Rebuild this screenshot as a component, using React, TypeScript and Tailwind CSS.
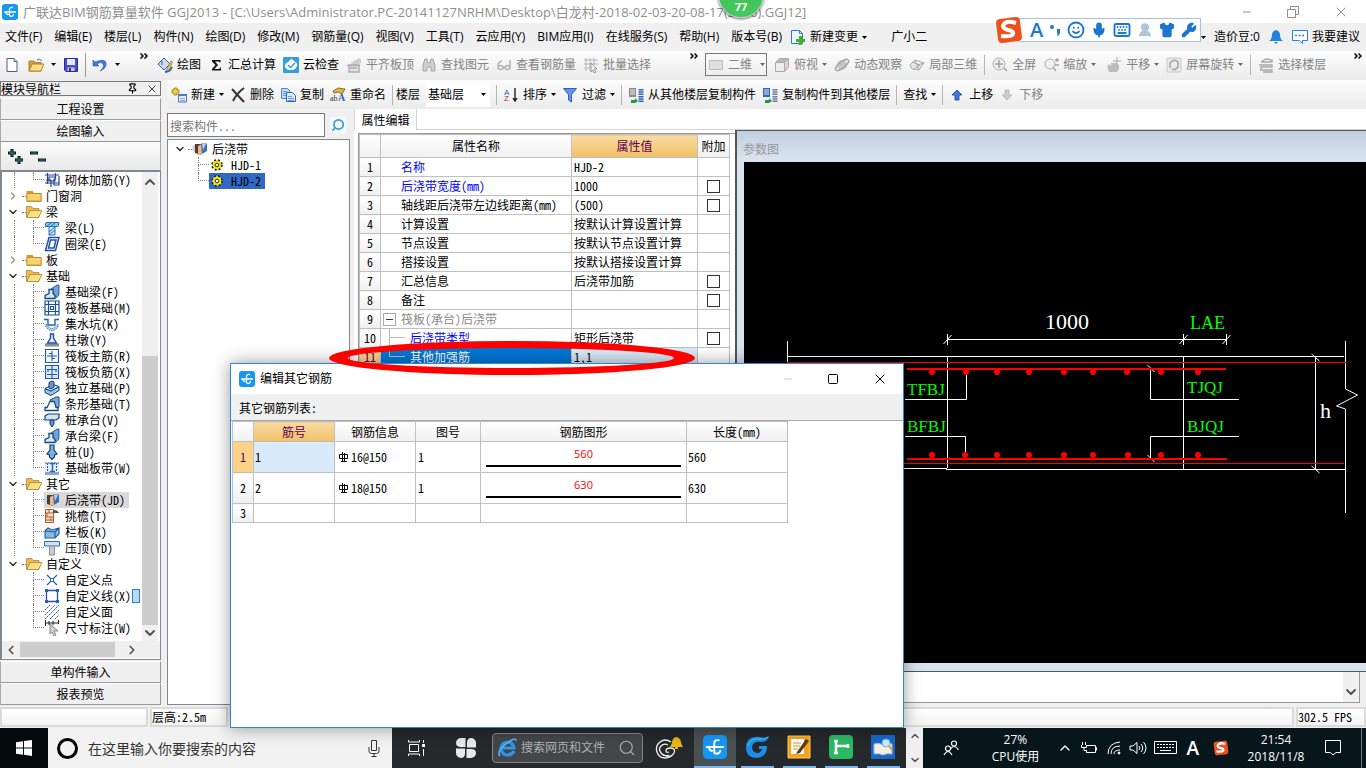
import type { ReactNode } from "react";
import {
  ChevronDown,
  ChevronLeft,
  ChevronRight,
  ChevronUp,
  Keyboard,
  Mic,
  Minus,
  Pin,
  Search,
  Shirt,
  Smile,
  Square,
  UserRound,
  Wrench,
  X,
} from "lucide-react";

const UI = "font-['Open_Sans','Noto_Sans_CJK_SC',sans-serif]";
const SONG = "font-['Noto_Sans_Mono_CJK_SC','Noto_Sans_CJK_SC',monospace]";

/* ---------------------------------------------------------------- icons */

const GLYPHS: Record<string, ReactNode> = {
  newFile: (
    <>
      <path d="M3 1.5h7l3 3v10H3z" fill="#fff" stroke="#4d6185" />
      <path d="M10 1.5v3h3" fill="#cfdcf0" stroke="#4d6185" />
    </>
  ),
  open: (
    <>
      <path d="M1 4h5l1 1.500h6V14H1z" fill="#d9a536" stroke="#9a6d12" strokeWidth=".8" />
      <path d="M4 7h12l-3 7H1z" fill="#fbdc85" stroke="#9a6d12" strokeWidth=".8" />
      <path d="M9 3q3-2 5 1" fill="none" stroke="#4a74b4" />
    </>
  ),
  save: (
    <>
      <path d="M1.500 1.500h13v13H3l-1.500-1.500z" fill="#4a4ad0" stroke="#2b2b93" />
      <path d="M4 2h8v6H4z" fill="#dfe8ff" />
      <path d="M4.500 10.500h7V14h-7z" fill="#c9c9d8" />
      <path d="M6 11h2v3H6z" fill="#2b2b93" />
    </>
  ),
  undo: (
    <path d="M1 3v6h6L5 7q4-3 6 0t-3 7q7-3 6-8T3 5z" fill="#3f78d8" stroke="#2456a8" strokeWidth=".6" />
  ),
  paint: (
    <>
      <path d="m1 7 6-6 6 6-6 6z" fill="#cfdcf0" stroke="#385b93" />
      <path d="M5 4v4" stroke="#385b93" />
      <path d="M9 14 14 4l1.500 1L12 14z" fill="#f2c64b" stroke="#83651b" strokeWidth=".6" />
      <path d="M8 15q5 0 7-5" fill="none" stroke="#2d62c8" strokeWidth="2" />
    </>
  ),
  sigma: <path d="M12.500 3H4v1.500L7.500 8 4 12v1.500h9v-3h-1q0 1.500-1 1.500H6.500L10 8 7 4.500h4q.5 0 .5 1h1z" fill="#111" />,
  cloudCheck: (
    <>
      <rect width="16" height="16" rx="1" fill="#2f9fe0" />
      <path d="M8 2a6 6 0 0 1 4 3q3 1 2 4t-4 4H6q-4-1-4-4t3-4z" fill="#fff" />
      <path d="m5 8 2.500 2.500L12 6" fill="none" stroke="#2f9fe0" strokeWidth="1.500" />
    </>
  ),
  align: (
    <>
      <path d="M5 6 13 1l2 1v4l-8 4z" fill="#cfcfcf" />
      <path d="M3 15V8h10v7zM1 8.500h13M4 11h7" fill="#e4e4e4" stroke="#acacac" strokeWidth="1.400" />
    </>
  ),
  binoculars: (
    <path d="M2 14V8l2-6h2l1 4h2l1-4h2l2 6v6h-4v-4H6v4z" fill="#cfcfcf" stroke="#a5a5a5" />
  ),
  glasses: (
    <path d="M6 4Q2 5 2 9m12-6v7M2 10.500a2.500 2 0 1 0 5 0 2.500 2 0 1 0-5 0m7 0a2.500 2 0 1 0 5 0 2.500 2 0 1 0-5 0M7 10h2" fill="none" stroke="#b0b0b0" strokeWidth="1.500" />
  ),
  batch: (
    <>
      <path d="M1 3h14M1 7h14M1 11h8M3 1v13M7 1v13M11 1v7" stroke="#b4b4b4" />
      <path d="m8 6 6 6h-3l2 3-2 1-1-3-2 2z" fill="#f3f3f3" stroke="#999" />
    </>
  ),
  plane: <path d="M1.500 3.500h13v9h-13z" fill="#e0e0e0" stroke="#bdbdbd" />,
  cube: (
    <>
      <path d="M1.500 5.500h9v9h-9z" fill="#ececec" stroke="#ababab" />
      <path d="m1.500 5.500 4-4h9l-4 4z" fill="#b9b9b9" stroke="#ababab" />
      <path d="m10.500 5.500 4-4v9l-4 4z" fill="#d5d5d5" stroke="#ababab" />
    </>
  ),
  orbit: (
    <>
      <circle cx="8" cy="8" r="5" fill="#c6c6c6" />
      <ellipse cx="8" cy="8" rx="8" ry="3" transform="rotate(-38 8 8)" fill="none" stroke="#a7a7a7" strokeWidth="1.400" />
    </>
  ),
  local3d: (
    <path d="m1 8 5-5 9 3-5 7-7-1zm5-5 2 5 7-2M8 8l2 5M3 5l8 3-6 4" fill="#e6e6e6" stroke="#aaa" />
  ),
  fullscreen: (
    <>
      <circle cx="7" cy="7" r="6" fill="#ededed" stroke="#b0b0b0" />
      <path d="M7 3v8M3 7h8m1 4 3 3" stroke="#a5a5a5" strokeWidth="1.600" />
    </>
  ),
  zoomer: (
    <>
      <circle cx="7" cy="7" r="5" fill="#f0f0f0" stroke="#b0b0b0" />
      <path d="m10 10 3 4M12 3h4m-2-2v4M12 8h4" stroke="#a5a5a5" strokeWidth="1.300" />
    </>
  ),
  pan: (
    <>
      <path d="M3 15Q0 9 3 7l2 2V6h5l3 2v4l-2 3z" fill="#bdbdbd" />
      <path d="M11 0v8M7 4h8" stroke="#a8a8a8" />
    </>
  ),
  rotate: (
    <>
      <path d="M1 1h14v14H1z" fill="#e9e9e9" stroke="#c9c9c9" />
      <path d="M4 11V6q4-5 8-1v5q-3 4-6 2" fill="none" stroke="#a5a5a5" strokeWidth="1.600" />
    </>
  ),
  floors: (
    <path d="m3 5 5-3 6 1v2H3m-2 3h13v2H3v3h11v2H5" fill="none" stroke="#a8a8a8" strokeWidth="1.400" />
  ),
  create: (
    <>
      <path d="M7.500 7.500h8v7.500h-8z" fill="#e5eefc" stroke="#4c78bd" />
      <path d="M7 7h9v2H7z" fill="#4c78bd" />
      <path d="M9 11.500h5M9 13.500h5" stroke="#88a7d5" />
      <path d="M3 1h3v2h2v3H6v2H3V6H1V3h2z" fill="#f6cf3f" stroke="#876a0a" strokeWidth=".7" />
    </>
  ),
  remove: <path d="m2 2 12 13M14 1Q7 6 3 14" stroke="#333" strokeWidth="2" fill="none" />,
  copy: (
    <>
      <path d="M1.500 1.500h6l2 2v8h-8z" fill="#c3daf8" stroke="#5480c2" />
      <path d="M6.500 5.500h6l3 3v6h-9z" fill="#dbe9fd" stroke="#3867b2" />
      <path d="M8 9.500h4m-4 2h6m-6 2h6M3 4.500h4m-4 2h3m-3 2h3" stroke="#6f98d4" />
    </>
  ),
  rename: (
    <>
      <path d="m3 4 5-3 7 1-3 5-4-2-4 1z" fill="#e1b548" stroke="#6d5420" strokeWidth=".8" />
      <text x="0" y="14" fontSize="8" fontFamily="Liberation Serif, serif" fill="#333">ab</text>
      <text x="8" y="14" fontSize="10" fontWeight="bold" fontFamily="Liberation Serif, serif" fill="#2762c4">A</text>
    </>
  ),
  sort: (
    <>
      <text x="1" y="8" fontSize="8" fontFamily="Liberation Sans, sans-serif" fill="#2b5fb4">A</text>
      <text x="1" y="14" fontSize="8" fontFamily="Liberation Sans, sans-serif" fill="#a03a3a">Z</text>
      <path d="M12 1v12m-2-2 2 3 2-3" stroke="#111" strokeWidth="1.300" fill="none" />
    </>
  ),
  filter: <path d="M1.500 1.500h13l-5 6V15l-3-2V7.500z" fill="#5f95ec" stroke="#2e5fb5" />,
  fromFloor: (
    <>
      <path d="M1 1h7v9H1z" fill="#8a8a8a" />
      <path d="M2 3h5M2 5h5M2 7h5" stroke="#eee" />
      <path d="M13 2v13" stroke="#2f67b8" strokeWidth="5" strokeDasharray="1.500 .8" />
      <path d="M3 13h4v-2l3 3-3 2H3z" fill="#1c9a3c" />
    </>
  ),
  toFloor: (
    <>
      <path d="M1 1h7v9H1z" fill="#2f67b8" />
      <path d="M2 3h5M2 5h5M2 7h5" stroke="#eee" />
      <path d="M13 2v13" stroke="#6a7f9c" strokeWidth="5" strokeDasharray="1.500 .8" />
      <path d="M3 13h4v-2l3 3-3 2H3z" fill="#1c9a3c" />
    </>
  ),
  up: <path d="m8 3 5 5h-3v5H6V8H3z" fill="#3f78e0" stroke="#1d3f91" strokeWidth=".8" />,
  down: <path d="m8 13 5-5h-3V3H6v5H3z" fill="#cdcdcd" stroke="#b3b3b3" strokeWidth=".8" />,
  change: (
    <>
      <path d="M1.500 1.500h8l3 3v10h-11z" fill="#eef6ff" stroke="#2c7cd1" />
      <path d="M9.500 1.500v3h3" fill="none" stroke="#2c7cd1" />
      <path d="M9 7h3v3h3v3h-3v3H9v-3H6v-3h3z" fill="#45b02b" />
    </>
  ),
  bell: (
    <>
      <path d="M8 1q4 1 4 5 0 4 3 6H1q3-2 3-6 0-4 4-5z" fill="#2083e0" />
      <path d="M6 13h4l-2 2z" fill="#2083e0" />
    </>
  ),
  bubble: (
    <>
      <path d="M.5 1.500h15v10h-5v3l-3-3h-7z" fill="#fff" stroke="#2083e0" />
      <path d="M3 6.500h10" stroke="#2083e0" strokeWidth="1.500" strokeDasharray="2 1.500" />
    </>
  ),
  folder: (
    <>
      <path d="M.5 3h6l1.500 2h7.500v9H.5z" fill="#d79e29" />
      <path d="M1 5.500h14V13H1z" fill="#f8d373" stroke="#b47d16" strokeWidth=".7" />
    </>
  ),
  folderOpen: (
    <>
      <path d="M.5 2.500h5l1.500 2h6V13H.5z" fill="#e9bd55" stroke="#97681a" strokeWidth=".6" />
      <path d="M4 6.500h12L12.500 13.500H.8z" fill="#fbdf85" stroke="#a8761a" strokeWidth=".7" />
    </>
  ),
  masonry: (
    <path d="M1 3h14M1 11h14M3.500 1v11m8-11v6M5 5h6v4H5zM2 8h5v7m3-8v6h5V4" fill="none" stroke="#28459e" strokeWidth="1.200" />
  ),
  beam: (
    <>
      <path d="M2 2.500h13l-1 4H1z" fill="#8cc6ee" stroke="#2b6fb5" />
      <path d="M5 6.500h6V15H5z" fill="#cbe7fa" stroke="#2b6fb5" />
      <path d="m5 12 6-5m-6 8 6-5M3 6l4-3m0 3 4-3" stroke="#2b6fb5" />
    </>
  ),
  ringBeam: <path d="M5 1.500h10L11.500 14.500h-10zM6.500 4h5.500L10 12H4.500z" fill="#fff" stroke="#2350ae" strokeWidth="1.500" />,
  foundationBeam: (
    <>
      <path d="m7 5 6-4h2v10l-3 3z" fill="#6ea3d8" stroke="#154a83" strokeWidth=".8" />
      <path d="M1 14.500v-3l4-2v-4h4v4l2 2v3z" fill="#d7e9fa" stroke="#154a83" strokeWidth="1.300" />
    </>
  ),
  raft: <path d="M1 1h14v14H1zM4.500 1v14m7-14v14M1 4.500h14M1 11.500h14M6.500 6.500h3v3h-3z" fill="none" stroke="#1b4e92" strokeWidth="1.200" />,
  sump: (
    <>
      <path d="M0 3.500h4V9h7V3.500h4" fill="none" stroke="#2362b5" strokeWidth="1.400" />
      <path d="M2 8q6 9 12 0v3q-6 7-12 0z" fill="#b9d7f2" stroke="#2362b5" strokeDasharray="1.500 1" />
    </>
  ),
  pier: (
    <>
      <path d="M1 11.500h14v3H1z" fill="#8b8b8b" />
      <path d="M6.500 2h3v4l3 5h-9l3-5z" fill="#dcecff" stroke="#1d4fa3" strokeWidth="1.400" />
    </>
  ),
  mainBar: <path d="M1.500 1.500h13v13h-13zM8 3v10M3 8h10M5 5.500h3m0 5h3" fill="#f3f8ff" stroke="#1f58b8" strokeWidth="1.100" />,
  negBar: <path d="M1.500 1.500h13v13h-13zM8 1v14M3 5.500h10M3 10.500h10M4 5v3m8-3v3" fill="#dce9fb" stroke="#1f58b8" strokeWidth="1.100" />,
  isolated: (
    <>
      <path d="M1 8.500v4l6 3 8-5V6.500L7 11z" fill="#9dc4ea" stroke="#123f74" />
      <path d="m1 8.500 8-4 6 2-8 4.500z" fill="#d8e9fa" stroke="#123f74" />
      <path d="M5 2.500 8 1l2 1v5L7 9 5 8z" fill="#6598c9" stroke="#123f74" />
    </>
  ),
  strip: (
    <>
      <path d="m6 4 6-3h3v10l-3 3z" fill="#7eaddb" stroke="#154a83" />
      <path d="M1 14.500v-3h2l2-4 1-2h4l1 2 1 4h2v3z" fill="#fff" stroke="#154a83" strokeWidth="1.300" />
    </>
  ),
  cap: (
    <>
      <path d="M1 4 4 2h11v4l-3 2H1z" fill="#cfe3f7" stroke="#123f74" strokeWidth="1.200" />
      <path d="M6 8h4v4l-2 3-2-3z" fill="#5c93cc" stroke="#123f74" />
    </>
  ),
  pile: <path d="M6 1h4v5l3 4-2.500 1v2L8 15.500 5.500 13v-2L3 10l3-4z" fill="#7fb0e0" stroke="#123f74" strokeWidth="1.200" />,
  bandPlate: (
    <>
      <path d="M1 3h14v9H1z" fill="#e4eefb" />
      <path d="M1 3h14M3.500 3v9m9-9v9" stroke="#2b5fb4" strokeDasharray="2 1" />
      <path d="M1 12h14v3H1z" fill="#8aa7cd" />
      <path d="M6 3.500h5M6 11.500h5M8.500 3v9" stroke="#2b5fb4" strokeWidth="1.400" />
    </>
  ),
  postCast: (
    <>
      <path d="M.5 5 4 3v9l-3.500-2z" fill="#c8d2e2" />
      <path d="M3 3h6v11l-6-2z" fill="#5a3a26" />
      <path d="m6 5 4-2v10l-4 1z" fill="#e9b98e" />
      <path d="M9 2.500h6V10l-5 3z" fill="#3f6cb8" />
      <path d="M10 3h4l-3 6z" fill="#b6d0f1" />
    </>
  ),
  eave: (
    <>
      <path d="M1.500 1.500h8v13h-8z" fill="#fbe5d4" stroke="#b55523" />
      <path d="M1 5h8M1 9h8M5 1v4m-2 0v4m4 0v4M1 12h8" stroke="#b55523" />
      <path d="M9 2q5 0 6 3H9z" fill="#55504a" />
    </>
  ),
  rail: <path d="m1 7 3-3 4 2 7-2v6l-4 4H1zm0 0 10 1v6m0-6 4-4" fill="#8bb9e4" stroke="#215d9c" strokeWidth="1.100" />,
  coping: (
    <>
      <path d="M.5 1.500h15V6H.5z" fill="#cfe2f6" stroke="#2b6fc4" />
      <path d="M5.500 6h5v9h-5z" fill="#cacaca" stroke="#909090" />
    </>
  ),
  customPoint: (
    <>
      <path d="m3 3 10 10m0-10L3 13" stroke="#2b5fb4" strokeWidth="1.200" />
      <path d="M6.500 6.500h3v3h-3z" fill="#fff" stroke="#2b5fb4" />
    </>
  ),
  customLine: (
    <>
      <path d="M2.500 2.500h11v11h-11z" fill="none" stroke="#2350ae" strokeWidth="1.300" />
      <path d="M1 1h3v3H1zm11 0h3v3h-3zM1 12h3v3H1zm11 0h3v3h-3z" fill="#2b5fb4" />
    </>
  ),
  customFace: <path d="m1 6 5-5M1 11 11 1M1 15 15 1M6 15l9-9m-4 9 4-4" stroke="#2b5fb4" strokeDasharray="2 .6" />,
  dimension: (
    <>
      <path d="M1 3h14M1.500 0v6m13-6v4M5 1v4m4-4v4" stroke="#222" />
      <path d="m6 4 8 7h-4l2 4-2 1-2-4-2 2z" fill="#cfcfcf" stroke="#8c8c8c" />
    </>
  ),
  gear: (
    <>
      <circle cx="8" cy="8" r="4" fill="#f1e51a" stroke="#f1e51a" strokeWidth="2" />
      <circle cx="8" cy="8" r="5" fill="none" stroke="#222" strokeWidth="1.500" strokeDasharray="2 2" />
      <circle cx="8" cy="8" r="1.800" fill="#fff" stroke="#333" />
    </>
  ),
  logo: (
    <>
      <rect width="16" height="16" rx="3" fill="#1597f3" />
      <path
        d="M10.500 3.500Q7.500 3 7.500 5.500V11q0 1.500 1.500 1.500 2 0 2.500-2M2.500 8h11M4 8q0 2.500 2 2.500"
        fill="none"
        stroke="#fff"
        strokeWidth="1.300"
        strokeLinecap="round"
      />
    </>
  ),
};

function Glyph({ name, className = "size-4" }: { name: string; className?: string }) {
  return (
    <svg viewBox="0 0 16 16" className={`shrink-0 ${className}`} aria-hidden>
      {GLYPHS[name]}
    </svg>
  );
}

function Caret({ className = "text-black" }: { className?: string }) {
  return (
    <svg viewBox="0 0 5 3" className={`h-[3px] w-[5px] shrink-0 ${className}`} aria-hidden>
      <path d="M0 0h5L2.500 3z" fill="currentColor" />
    </svg>
  );
}

function SogouMark({ className }: { className: string }) {
  return (
    <svg viewBox="0 0 28 28" className={className} aria-hidden>
      <rect x="2" y="2" width="24" height="24" rx="4" fill="#f0501e" transform="rotate(-7 14 14)" />
      <path d="M21 7q-9-3-12 1t4 6q6 1 5 4t-12 2" fill="none" stroke="#fff" strokeWidth="4" />
    </svg>
  );
}

/* -------------------------------------------------------------- toolbars */

function Tool({
  icon,
  label,
  caret,
  muted,
}: {
  icon?: string;
  label: string;
  caret?: boolean;
  muted?: boolean;
}) {
  return (
    <button type="button" className={`flex shrink-0 items-center gap-1 ${muted ? "text-[#838383]" : "text-black"}`}>
      {icon && <Glyph name={icon} />}
      {label}
      {caret && <Caret className={muted ? "text-[#6d6d6d]" : "text-black"} />}
    </button>
  );
}

const Divider = () => <span className="h-5 w-px shrink-0 bg-[#b5b5b5]" />;
const More = () => (
  <svg viewBox="0 0 8 6" className="-mt-3 h-1.5 w-2" fill="none" stroke="#000" strokeWidth="1.500" aria-hidden>
    <path d="m.5.5 2.500 2.500L.5 5.500m4-5L7 3 4.500 5.500" />
  </svg>
);

const MENUS = [
  "文件(F)", "编辑(E)", "楼层(L)", "构件(N)", "绘图(D)", "修改(M)", "钢筋量(Q)", "视图(V)",
  "工具(T)", "云应用(Y)", "BIM应用(I)", "在线服务(S)", "帮助(H)", "版本号(B)",
];

function TitleBar() {
  return (
    <header className="flex h-[23px] shrink-0 items-center bg-white pl-0.5 text-[#8f8f8f]">
      <Glyph name="logo" />
      <h1 className="ml-[5px] text-[13px] leading-5 whitespace-pre">
        广联达BIM钢筋算量软件 GGJ2013 - [C:\Users\Administrator.PC-20141127NRHM\Desktop\白龙村-2018-02-03-20-08-17(2666).GGJ12]
      </h1>
      <div className="mr-[17px] ml-auto flex items-center gap-[34px]">
        <button type="button" aria-label="最小化" className="w-3"><Minus className="size-3" strokeWidth={2} /></button>
        <button type="button" aria-label="还原">
          <svg viewBox="0 0 12 12" className="size-3" fill="none" stroke="currentColor">
            <path d="M.5 3.500h8v8h-8zM3.500 3.500v-3h8v8h-3" />
          </svg>
        </button>
        <button type="button" aria-label="关闭"><X className="size-4" strokeWidth={1.500} /></button>
      </div>
    </header>
  );
}

function MenuBar() {
  return (
    <nav className="flex h-7 shrink-0 items-center gap-3 bg-[#f0f0f0] pr-1.5 pl-[5px] text-[12px] whitespace-nowrap">
      {MENUS.map((m) => (
        <button key={m} type="button" className="shrink-0">{m}</button>
      ))}
      <button type="button" className="-ml-1 flex shrink-0 items-center gap-1">
        <Glyph name="change" />
        新建变更
        <Caret />
      </button>
      <button type="button" className="ml-3 shrink-0">广小二</button>
      <span className="ml-auto flex items-center gap-2">
        <Caret />
        <span>造价豆:0</span>
        <Glyph name="bell" />
        <button type="button" className="flex items-center gap-1"><Glyph name="bubble" />我要建议</button>
      </span>
    </nav>
  );
}

function MainToolbar() {
  return (
    <div className="flex h-[29px] shrink-0 items-center bg-linear-to-b from-[#fdfdfd] to-[#ebebeb] pb-0.5 text-[12px] whitespace-nowrap">
      <div className="flex w-[154px] shrink-0 items-center pl-1">
        <button type="button" aria-label="新建"><Glyph name="newFile" /></button>
        <button type="button" aria-label="打开" className="ml-2 flex items-center gap-[7px]"><Glyph name="open" /><Caret /></button>
        <button type="button" aria-label="保存" className="ml-[7px]"><Glyph name="save" /></button>
        <span className="mx-1.5 h-6 w-px bg-[#9a9a9a]" />
        <button type="button" aria-label="撤销" className="flex items-center gap-[7px]"><Glyph name="undo" /><Caret /></button>
        <span className="ml-5"><More /></span>
      </div>
      <div className="flex shrink-0 items-center gap-[7px] pl-[3px]">
        <Tool icon="paint" label="绘图" />
        <Tool icon="sigma" label="汇总计算" />
        <Tool icon="cloudCheck" label="云检查" />
        <Tool icon="align" label="平齐板顶" muted />
        <Tool icon="binoculars" label="查找图元" muted />
        <Tool icon="glasses" label="查看钢筋量" muted />
        <Tool icon="batch" label="批量选择" muted />
      </div>
      <span className="ml-[39px] w-[15px]"><More /></span>
      <div className="flex flex-1 items-center gap-[7px] overflow-hidden">
        <button type="button" className="flex h-[23px] w-[62px] shrink-0 items-center gap-1 border border-[#777] pl-0.5 text-[#838383]">
          <Glyph name="plane" />
          二维
          <span className="ml-1"><Caret className="text-[#6d6d6d]" /></span>
        </button>
        <Tool icon="cube" label="俯视" caret muted />
        <Tool icon="orbit" label="动态观察" muted />
        <Tool icon="local3d" label="局部三维" muted />
        <Divider />
        <Tool icon="fullscreen" label="全屏" muted />
        <Tool icon="zoomer" label="缩放" caret muted />
        <span className="-ml-1" />
        <Tool icon="pan" label="平移" caret muted />
        <Tool icon="rotate" label="屏幕旋转" caret muted />
        <Divider />
        <Tool icon="floors" label="选择楼层" muted />
        <span className="mr-1 ml-auto"><More /></span>
      </div>
    </div>
  );
}

function ComponentToolbar() {
  return (
    <div className="flex h-[29px] shrink-0 items-center gap-1.5 rounded-l bg-linear-to-b from-[#fdfdfd] to-[#ebebeb] pl-1 text-[12px] whitespace-nowrap">
      <Tool icon="create" label="新建" caret />
      <Tool icon="remove" label="删除" />
      <Tool icon="copy" label="复制" />
      <Tool icon="rename" label="重命名" />
      <span className="flex items-center gap-[3px]"><Divider /><label htmlFor="floor">楼层</label></span>
      <span className="relative flex items-center bg-white">
        <select id="floor" className="h-6 w-16 appearance-none bg-transparent pl-0.5 text-[12px] outline-none">
          <option>基础层</option>
        </select>
        <span className="pointer-events-none absolute right-1"><Caret /></span>
      </span>
      <Divider />
      <Tool icon="sort" label="排序" caret />
      <Tool icon="filter" label="过滤" caret />
      <Divider />
      <Tool icon="fromFloor" label="从其他楼层复制构件" />
      <Tool icon="toFloor" label="复制构件到其他楼层" />
      <Divider />
      <Tool label="查找" caret />
      <Divider />
      <Tool icon="up" label="上移" />
      <Tool icon="down" label="下移" muted />
    </div>
  );
}

/* -------------------------------------------------------- navigation tree */

type Group = { name: string; open?: boolean; items?: [icon: string, label: string][] };

const GROUPS: Group[] = [
  { name: "门窗洞" },
  { name: "梁", open: true, items: [["beam", "梁(L)"], ["ringBeam", "圈梁(E)"]] },
  { name: "板" },
  {
    name: "基础",
    open: true,
    items: [
      ["foundationBeam", "基础梁(F)"],
      ["raft", "筏板基础(M)"],
      ["sump", "集水坑(K)"],
      ["pier", "柱墩(Y)"],
      ["mainBar", "筏板主筋(R)"],
      ["negBar", "筏板负筋(X)"],
      ["isolated", "独立基础(P)"],
      ["strip", "条形基础(T)"],
      ["cap", "桩承台(V)"],
      ["foundationBeam", "承台梁(F)"],
      ["pile", "桩(U)"],
      ["bandPlate", "基础板带(W)"],
    ],
  },
  {
    name: "其它",
    open: true,
    items: [["postCast", "后浇带(JD)"], ["eave", "挑檐(T)"], ["rail", "栏板(K)"], ["coping", "压顶(YD)"]],
  },
  {
    name: "自定义",
    open: true,
    items: [
      ["customPoint", "自定义点"],
      ["customLine", "自定义线(X)"],
      ["customFace", "自定义面"],
      ["dimension", "尺寸标注(W)"],
    ],
  },
];

function Elbow({ last }: { last?: boolean }) {
  return (
    <span className="flex h-4 w-[11px] shrink-0 flex-col">
      <span className="h-2 border-b border-l border-dotted border-[#808080]" />
      <span className={`h-2 ${last ? "" : "border-l border-dotted border-[#808080]"}`} />
    </span>
  );
}

function Leaf({ icon, label, last, guide }: { icon: string; label: string; last: boolean; guide: boolean }) {
  const current = label === "后浇带(JD)";
  return (
    <li className="flex h-4 items-center pl-3 whitespace-nowrap">
      <span className={`h-4 w-[19px] shrink-0 ${guide ? "border-l border-dotted border-[#808080]" : ""}`} />
      <Elbow last={last} />
      <span className={`flex h-4 items-center gap-[5px] pr-1 ${current ? "bg-[#d9d9d9]" : ""}`}>
        <Glyph name={icon} />
        <span className="leading-4">{label}</span>
      </span>
      {label === "自定义线(X)" && <span className="-ml-[3px] h-[14px] w-2 shrink-0 border border-[#2d7fd3] bg-[#b9d9f7]" />}
    </li>
  );
}

function NavTree() {
  return (
    <ul className="min-w-0 flex-1 overflow-hidden">
      <Leaf icon="masonry" label="砌体加筋(Y)" last guide />
      {GROUPS.map((g, gi) => (
        <li key={g.name}>
          <div className="flex h-4 items-center pl-[5px]">
            {g.open ? (
              <ChevronDown className="size-3 text-[#333]" strokeWidth={3} />
            ) : (
              <ChevronRight className="size-3 text-[#999]" strokeWidth={3} />
            )}
            <span className="ml-[3px] w-1 border-t border-dotted border-[#808080]" />
            <Glyph name={g.open ? "folderOpen" : "folder"} />
            <span className="ml-1 leading-4">{g.name}</span>
          </div>
          {g.items && (
            <ul>
              {g.items.map(([icon, label], i) => (
                <Leaf
                  key={label}
                  icon={icon}
                  label={label}
                  last={i === g.items!.length - 1}
                  guide={gi < GROUPS.length - 1}
                />
              ))}
            </ul>
          )}
        </li>
      ))}
    </ul>
  );
}

function PanelButton({ children }: { children: ReactNode }) {
  return (
    <button type="button" className="block h-[22px] w-full border border-t-white border-r-[#999] border-b-[#999] border-l-[#aaa] bg-[#f0f0f0] leading-5">
      {children}
    </button>
  );
}

function NavPanel() {
  return (
    <aside className={`flex w-[161px] shrink-0 flex-col text-[12px] ${SONG}`}>
      <div className="mt-px flex h-[15px] items-center border border-[#777] leading-3">
        <h2>模块导航栏</h2>
        <Pin className="ml-auto size-[11px]" strokeWidth={2.500} />
        <X className="mr-0.5 ml-2 size-3" strokeWidth={1.500} />
      </div>
      <div className="mt-0.5">
        <PanelButton>工程设置</PanelButton>
        <PanelButton>绘图输入</PanelButton>
      </div>
      <div className="flex h-7 items-center border border-t-0 border-b-0 border-[#aaa] bg-linear-to-b from-[#fbfbfb] to-[#e9e9e9] pl-1.5">
        <svg viewBox="0 0 40 16" className="h-4 w-10" aria-hidden>
          <path d="M1 5h8M5 1v8M8 12h8M12 8v8M23 5h8M31 12h8" stroke="#111" strokeWidth="3" />
          <path d="M2 5h6M5 2v6M9 12h6M12 9v6M24 5h6M32 12h6" stroke="#0f9a8c" />
        </svg>
      </div>
      <div className="flex min-h-0 flex-1 flex-col border-2 border-r border-b border-[#828790] bg-white">
        <div className="flex min-h-0 flex-1">
          <NavTree />
          <div className="mr-0.5 flex w-4 shrink-0 flex-col items-center bg-[#f0f0f0]">
            <ChevronUp className="mt-0.5 size-4 shrink-0 text-[#555]" strokeWidth={3} />
            <span className="mt-[166px] h-[270px] w-full bg-[#cdcdcd]" />
            <ChevronDown className="size-4 shrink-0 text-[#555]" strokeWidth={3} />
          </div>
        </div>
        <div className="mb-px flex h-[17px] shrink-0 items-center bg-[#f0f0f0]">
          <ChevronLeft className="ml-0.5 size-[14px] text-[#555]" strokeWidth={3} />
          <span className="ml-0.5 h-[15px] w-[95px] bg-[#cdcdcd]" />
          <ChevronRight className="ml-2.5 size-[14px] text-[#555]" strokeWidth={3} />
        </div>
      </div>
      <div className="mt-px mb-0.5">
        <PanelButton>单构件输入</PanelButton>
        <PanelButton>报表预览</PanelButton>
      </div>
    </aside>
  );
}

/* --------------------------------------------------------- component list */

function ComponentList() {
  return (
    <section className={`flex w-[183px] shrink-0 flex-col text-[12px] ${SONG}`}>
      <div className="flex h-[30px] items-center bg-[#f0f0f0] pt-0.5">
        <input
          aria-label="搜索构件"
          placeholder="搜索构件..."
          className="h-6 w-[158px] border border-[#7a7a7a] bg-white px-0.5 placeholder-[#777] outline-none"
        />
        <button type="button" aria-label="搜索" className="ml-[5px] grid size-4 place-items-center bg-[#f4faff]">
          <Search className="size-[14px] -scale-x-100 text-[#3d9be0]" strokeWidth={3} />
        </button>
      </div>
      <ul className="min-h-0 flex-1 border border-[#828790] bg-white pt-px">
        <li className="flex h-4 items-center pl-1.5">
          <ChevronDown className="size-3 text-[#333]" strokeWidth={3} />
          <span className="ml-0.5 w-1 border-t border-dotted border-[#808080]" />
          <Glyph name="postCast" />
          <span className="ml-1 leading-4">后浇带</span>
        </li>
        <li className="flex h-4 items-center pl-[30px]">
          <Elbow />
          <span className="flex items-center gap-1.5 leading-4"><Glyph name="gear" />HJD-1</span>
        </li>
        <li className="flex h-4 items-center pl-[30px]">
          <Elbow last />
          <span className="flex h-4 items-center gap-1.5 bg-[#316ac5] pr-1 leading-4"><Glyph name="gear" />HJD-2</span>
        </li>
      </ul>
    </section>
  );
}

/* -------------------------------------------------------- property editor */

type Prop = { name: string; value: string; check?: boolean; tone?: "blue" | "gray"; child?: boolean };

const PROPS: Prop[] = [
  { name: "名称", value: "HJD-2", tone: "blue" },
  { name: "后浇带宽度(mm)", value: "1000", check: true, tone: "blue" },
  { name: "轴线距后浇带左边线距离(mm)", value: "(500)", check: true },
  { name: "计算设置", value: "按默认计算设置计算" },
  { name: "节点设置", value: "按默认节点设置计算" },
  { name: "搭接设置", value: "按默认搭接设置计算" },
  { name: "汇总信息", value: "后浇带加筋", check: true },
  { name: "备注", value: "", check: true },
  { name: "筏板(承台)后浇带", value: "", tone: "gray" },
  { name: "后浇带类型", value: "矩形后浇带", check: true, tone: "blue", child: true },
  { name: "其他加强筋", value: "1,1", child: true },
];

const CELL = "border border-[#c0c0c0] p-0";
const HEAD = `${CELL} bg-linear-to-b from-white to-[#f0f0f0] font-normal`;
const HEAD_ON = `${CELL} bg-linear-to-b from-[#f9dba5] to-[#f3c063] font-normal text-[#5a0055]`;

function PropertyTable() {
  return (
    <table className="w-[371px] table-fixed border-collapse text-[12px]">
      <colgroup>
        <col className="w-[21px]" />
        <col className="w-[191px]" />
        <col className="w-[126px]" />
        <col className="w-8" />
      </colgroup>
      <thead>
        <tr className="h-[23px]">
          <th className={HEAD} />
          <th className={HEAD}>属性名称</th>
          <th className={HEAD_ON}>属性值</th>
          <th className={HEAD}>附加</th>
        </tr>
      </thead>
      <tbody>
        {PROPS.map((p, i) => {
          const active = i === PROPS.length - 1;
          const tone = p.tone === "blue" ? "text-[#0000ff]" : p.tone === "gray" ? "text-[#8a8a8a]" : "";
          return (
            <tr key={p.name} className="h-[19px] leading-4">
              <th scope="row" className={active ? `${CELL} bg-[#ffd28a] font-normal text-[#5a0055]` : HEAD}>{i + 1}</th>
              <td className={`${CELL} ${active ? "bg-[#0078d7] text-white" : tone}`}>
                <span className="flex h-[18px] items-center">
                  {p.tone === "gray" ? (
                    <span className="ml-0.5 grid size-[13px] place-items-center border border-[#aaa]">
                      <span className="h-px w-[7px] bg-[#333]" />
                    </span>
                  ) : p.child ? (
                    <span className="ml-2 flex h-[18px] w-4 flex-col">
                      <span className="h-[9px] border-b border-l border-[#bbb]" />
                      <span className={`h-[9px] ${active ? "" : "border-l border-[#bbb]"}`} />
                    </span>
                  ) : null}
                  <span className={p.tone === "gray" || p.child ? "ml-[5px]" : "ml-5"}>{p.name}</span>
                </span>
              </td>
              <td className={`${CELL} pl-0.5 ${active ? "bg-[#d9e9f7]" : ""}`}>{p.value}</td>
              <td className={CELL}>
                {p.check && (
                  <input
                    type="checkbox"
                    aria-label={`附加 ${p.name}`}
                    className="mx-auto block size-[13px] appearance-none border border-[#333] bg-white"
                  />
                )}
              </td>
            </tr>
          );
        })}
      </tbody>
    </table>
  );
}

/* --------------------------------------------------------- section drawing */

const TOP_DOTS = [932, 966, 997, 1029, 1064, 1093, 1127, 1161, 1198];
const BOTTOM_DOTS = [932, 965, 997, 1029, 1064, 1093, 1128, 1161, 1198];

function SectionDrawing() {
  return (
    <svg className="block h-full w-full" fill="none" stroke="#fff">
      <title>参数图</title>
      {/* drawing units share one origin, shifted into the canvas here */}
      <g transform="translate(-744 -162)">
        <path d="M787.500 341v22M787 356.500h557M947.500 356v112M1183.500 356v113M903 468.500h44M946 469.500h400" />
        <path d="M947 339.500h280M947.500 334v11M1183.500 334v11M1226.500 334v11m-283-1 8-9m228 9 8-9m35 9 8-9" />
        <path d="M905 399.500h61.500V374M905 436.500h60.500v17M1239 399.500h-88.500V369M1239 436.500h-88.500V459m-3-94 7 7m-7 83 7 7" />
        <path d="M1315.500 356v113m-4-115 8 7m-8 105 8 7" />
        <path d="M1345.500 341v48l12 6-21 11 9 3v104" />
        <g stroke="#f00">
          <path d="M787 362.500h559M903 463.500h441" />
          <path d="M907 369h319M907 459h320" strokeWidth="2" />
        </g>
        <g fill="#f00" stroke="none">
          {TOP_DOTS.map((x) => <circle key={x} cx={x} cy="372" r="3" />)}
          {BOTTOM_DOTS.map((x) => <circle key={x} cx={x} cy="455" r="3" />)}
        </g>
        <g fill="#0f0" stroke="none" fontSize="17" fontFamily="'Liberation Serif',serif">
          <text x="1190" y="329" fontSize="18">LAE</text>
          <text x="907" y="395">TFBJ</text>
          <text x="907" y="432">BFBJ</text>
          <text x="1187" y="393">TJQJ</text>
          <text x="1187" y="432">BJQJ</text>
        </g>
        <g fill="#fff" stroke="none" fontSize="22" fontFamily="'Liberation Serif',serif">
          <text x="1045" y="329">1000</text>
          <text x="1320" y="418">h</text>
        </g>
      </g>
    </svg>
  );
}

function DiagramWindow() {
  return (
    <section className="flex min-w-0 flex-1 flex-col border-y border-l-2 border-[#555] bg-[#d7e3f0]">
      <h2 className="flex h-[31px] shrink-0 items-center bg-linear-to-b from-[#c1cfde] to-[#dae5f1] pt-1 pl-1.5 text-[#999]">参数图</h2>
      <div className="mb-2 ml-[7px] min-h-0 flex-1 overflow-hidden bg-black">
        <SectionDrawing />
      </div>
    </section>
  );
}

function PropertyPanel() {
  return (
    <section className={`flex min-w-0 flex-1 flex-col pl-1 text-[12px] ${SONG}`}>
      <div className="flex h-[21px] shrink-0 bg-white">
        <button type="button" className="w-[63px] border-r border-l border-[#d5d5d5] leading-5">属性编辑</button>
        <span className="flex-1 border-b border-[#d5d5d5]" />
      </div>
      <div className="flex min-h-0 flex-1 bg-white">
        <div className="mt-[3px] ml-1 w-[377px] shrink-0 border-t border-l border-[#999]">
          <PropertyTable />
        </div>
        <DiagramWindow />
      </div>
      <div className="mr-1.5 mb-1 flex h-[31px] shrink-0 justify-end border-r border-b border-[#999] bg-white">
        <span className="flex w-4 items-end bg-[#f0f0f0]"><ChevronDown className="mb-0.5 size-4 text-[#555]" strokeWidth={3} /></span>
      </div>
    </section>
  );
}

/* ----------------------------------------------------------------- dialog */

const REBARS = [
  { no: "1", spec: "16@150", shape: "1", len: "560" },
  { no: "2", spec: "18@150", shape: "1", len: "630" },
];

function RebarGrade() {
  return (
    <svg viewBox="0 0 10 10" className="size-[10px]" fill="none" stroke="#000" aria-label="HRB400">
      <path d="M.5 2.500h8v4h-8zM3.500 0v9M5.500 1v8M2 9.500h6" />
    </svg>
  );
}

function RebarDialog() {
  return (
    <div
      role="dialog"
      aria-labelledby="rebar-title"
      className={`absolute top-[363px] bottom-10 left-[230px] flex w-[674px] flex-col border border-[#2e86e0] bg-white text-[12px] shadow-[0_0_16px_rgba(0,0,0,0.4)] ${SONG}`}
    >
      <header className={`flex h-[30px] shrink-0 items-center pr-[15px] pl-2 ${UI}`}>
        <Glyph name="logo" />
        <h2 id="rebar-title" className="ml-[5px]">编辑其它钢筋</h2>
        <div className="ml-auto flex items-center gap-8">
          <button type="button" aria-label="最小化"><Minus className="size-3 text-[#bbb]" strokeWidth={1.500} /></button>
          <button type="button" aria-label="最大化" className="p-px"><Square className="size-3" strokeWidth={2} /></button>
          <button type="button" aria-label="关闭"><X className="size-4" strokeWidth={1.500} /></button>
        </div>
      </header>
      <p className="flex h-[27px] shrink-0 items-center border-b border-[#aaa] bg-[#f0f0f0] pt-0.5 pl-2">其它钢筋列表:</p>
      <table className="ml-px w-[556px] table-fixed border-collapse">
        <colgroup>
          <col className="w-[21px]" />
          <col className="w-[81px]" />
          <col className="w-[81px]" />
          <col className="w-[65px]" />
          <col className="w-[206px]" />
          <col className="w-[101px]" />
        </colgroup>
        <thead>
          <tr className="h-5">
            <th className={HEAD} />
            <th className={HEAD_ON}>筋号</th>
            <th className={HEAD}>钢筋信息</th>
            <th className={HEAD}>图号</th>
            <th className={HEAD}>钢筋图形</th>
            <th className={HEAD}>长度(mm)</th>
          </tr>
        </thead>
        <tbody>
          {REBARS.map((r, i) => (
            <tr key={r.no} className="h-[31px]">
              <th scope="row" className={i === 0 ? `${CELL} bg-[#ffd28a] font-normal text-[#5a0055]` : HEAD}>{i + 1}</th>
              <td className={`${CELL} pl-px ${i === 0 ? "bg-[#d9eafa]" : ""}`}>{r.no}</td>
              <td className={`${CELL} pl-1`}>
                <span className="flex items-center gap-0.5"><RebarGrade />{r.spec}</span>
              </td>
              <td className={`${CELL} pl-0.5`}>{r.shape}</td>
              <td className={`${CELL} px-[5px] text-center text-[#f00] ${UI}`}>
                <span className="block border-b-2 border-black pb-1 text-[11px] leading-[14px]">{r.len}</span>
              </td>
              <td className={`${CELL} pl-px`}>{r.len}</td>
            </tr>
          ))}
          <tr className="h-[19px] leading-4">
            <th scope="row" className={HEAD}>3</th>
            <td className={CELL} />
            <td className={CELL} />
            <td className={CELL} />
            <td className={CELL} />
            <td className={CELL} />
          </tr>
        </tbody>
      </table>
    </div>
  );
}

/* --------------------------------------------------------- desktop overlays */

function ImeBar() {
  return (
    <div className="absolute top-4 left-[995px] flex items-center">
      <SogouMark className="z-10 size-7" />
      <div className="-ml-1 flex h-6 w-[182px] items-center justify-between border border-[#a9bfdc] bg-white pr-[3px] pl-2.5 text-[#1b76cf]">
        <span className="text-[20px] leading-none font-semibold">A</span>
        <svg viewBox="0 0 12 16" className="h-4 w-3" aria-hidden>
          <circle cx="3" cy="5" r="2" fill="currentColor" />
          <path d="M8 7h3v3q0 3-3 4 1-2 0-4z" fill="currentColor" />
        </svg>
        <Smile className="size-[18px]" strokeWidth={2.500} />
        <Mic className="size-4 fill-current" strokeWidth={2.500} />
        <Keyboard className="size-[18px]" strokeWidth={2.500} />
        <UserRound className="size-4 fill-current text-[#b4c4d8]" />
        <Shirt className="size-4 fill-current" />
        <Wrench className="size-4 fill-current" />
      </div>
    </div>
  );
}

function SpeedBall() {
  return (
    <div className="absolute -top-7 left-[718px] flex size-[46px] items-end justify-center rounded-full border border-[#c8c8c8] bg-linear-to-b from-[#3fbf55] to-[#45c85f] pb-1 text-[11px] leading-3 font-bold text-white shadow-[0_1px_3px_rgba(0,0,0,0.6)]">
      77
    </div>
  );
}

function RedRing() {
  return (
    <svg viewBox="0 0 366 34" className="pointer-events-none absolute top-[341px] left-[329px] h-[34px] w-[366px]" aria-hidden>
      <path
        d="M0 17a183 17 0 0 1 366 0 183 17 0 0 1-366 0zm19 0a163 10 0 0 0 326 0 163 10 0 0 0-326 0z"
        fill="#f00"
        fillRule="evenodd"
      />
    </svg>
  );
}

/* ---------------------------------------------------------- status/taskbar */

function StatusBar() {
  const cell = "flex h-5 items-center border-2 border-[#dadada] bg-linear-to-b from-white to-[#f3f3f3]";
  return (
    <footer className={`flex h-[21px] shrink-0 items-start gap-0.5 bg-[#f0f0f0] text-[12px] ${SONG}`}>
      <span className={`${cell} w-[148px]`} />
      <span className={`${cell} w-[78px]`}>层高:2.5m</span>
      <span className={`${cell} flex-1`} />
      <span className={`${cell} w-[70px]`}>302.5 FPS</span>
    </footer>
  );
}

function TaskApp({ children, active }: { children: ReactNode; active?: boolean }) {
  return (
    <button type="button" className={`flex h-10 w-[42px] flex-col items-center ${active ? "bg-[#4a5153]" : ""}`}>
      <span className="grid flex-1 place-items-center">{children}</span>
      <span className={`h-0.5 bg-[#7ab8f5] ${active ? "w-full" : "w-[33px]"}`} />
    </button>
  );
}

function Taskbar() {
  return (
    <footer className="flex h-10 shrink-0 items-center bg-[#25292b] text-white">
      <button type="button" aria-label="开始" className="grid h-10 w-12 place-items-center bg-[#050a0b]">
        <svg viewBox="0 0 16 16" className="size-4">
          <path d="M0 2.200 7 1.200v6.300H0zM8 1l8-1v7.500H8zM0 8.500h7v6.300l-7-1zM8 8.500h8V16l-8-1.200z" fill="#fff" />
        </svg>
      </button>
      <div className="flex h-10 w-[344px] items-center bg-[#f2f2f2] pr-3 pl-[9px] text-black">
        <span className="size-[21px] rounded-full border-[3px] border-black" />
        <input
          aria-label="在这里输入你要搜索的内容"
          placeholder="在这里输入你要搜索的内容"
          className="ml-2.5 min-w-0 flex-1 bg-transparent text-[14px] placeholder-[#333] outline-none"
        />
        <svg viewBox="0 0 12 18" className="h-[18px] w-3" fill="none" stroke="#333" aria-hidden>
          <path d="M3.500 1.500h5v10h-5zM1 8v4q0 2.500 2.500 2.500h5Q11 14.500 11 12V8M6 14.500v3M3.500 17.500h5" />
        </svg>
      </div>
      <button type="button" aria-label="任务视图" className="ml-4 p-0">
        <svg viewBox="0 0 17 16" className="h-4 w-[17px]" fill="none" stroke="#fff">
          <path d="M1.500 4.500h9v7h-9zM.5 0v2h11V0M.5 16v-2h11v2M15.500 0v3m0 6v7" />
          <path d="M14 4h3v3h-3z" fill="#fff" stroke="none" />
        </svg>
      </button>
      <svg viewBox="0 0 22 22" className="ml-[30px] size-[22px]" aria-hidden>
        <path
          d="M10.500 10V1H6a5 5 0 0 0-5 5q0 3.500 4 4zM12 10.500h9V6a5 5 0 0 0-5-5q-3.500 0-4 4zM11.500 12v9H16a5 5 0 0 0 5-5q0-3.500-4-4zM10 11.500H1V16a5 5 0 0 0 5 5q3.500 0 4-4z"
          fill="#e9e9e9"
        />
      </svg>
      <label className="ml-[15px] flex h-[30px] w-[151px] items-center gap-1 rounded-sm border border-[#848484] bg-[#43474a] pr-1.5 pl-1">
        <svg viewBox="0 0 20 20" className="size-5 shrink-0" aria-hidden>
          <path d="M17 13q-2 4-7 4a6.500 6.500 0 1 1 7-7H5" fill="none" stroke="#2d95ea" strokeWidth="3.200" />
          <path d="M3 18Q-1 14 9 6t10-3" fill="none" stroke="#5fb5f5" strokeWidth="1.500" />
        </svg>
        <input aria-label="搜索网页和文件" placeholder="搜索网页和文件" className="w-[88px] bg-transparent text-[12px] placeholder-[#b0b0b0] outline-none" />
        <Search className="ml-auto size-[18px] shrink-0 text-[#aaa]" strokeWidth={1.500} />
      </label>
      <svg viewBox="0 0 28 24" className="ml-3 h-6 w-7" fill="none" aria-hidden>
        <path
          d="M16 6Q10 2 5 6T2 16t8 6 9-5q2-5-4-5-4 0-4 3 0 2 3 1M13 9Q9 7 6 10t0 7 8 2M19 17q-3 5-8 3"
          stroke="#f0f0f0"
          strokeWidth="1.300"
        />
        <path d="M21 1q5 1 5 6l2 4H15l2-4q0-5 4-6zM20 11h3v2h-3z" fill="#e9b412" />
      </svg>
      <div className="ml-[11px] flex">
        <TaskApp active><Glyph name="logo" className="size-6" /></TaskApp>
        <TaskApp>
          <svg viewBox="0 0 24 24" className="size-6">
            <path d="M24 1Q21 4 15 2 2 0 1 12q0 11 11 11 10-1 10-12h-8v3h3q-1 4-5 4-5-1-5-6 1-6 9-5 7 0 8-6z" fill="#1c8de8" />
            <path d="M23 2Q19 5 14 4 5 3 3 11" fill="none" stroke="#5fc2ff" />
          </svg>
        </TaskApp>
        <TaskApp>
          <svg viewBox="0 0 24 24" className="size-6">
            <path d="M1 1h22v22H1z" fill="#f5a31c" stroke="#ffcb5a" />
            <path d="M4 4h13v15H4z" fill="#fff" />
            <path d="M6 8h8m-8 3h7m-7 3h5" stroke="#e88c1a" />
            <path d="m10 17 9-13 3 2-9 12-4 1z" fill="#5b3a1b" />
          </svg>
        </TaskApp>
        <TaskApp>
          <svg viewBox="0 0 24 24" className="size-6">
            <rect width="24" height="24" rx="4" fill="#2bb863" />
            <path d="M5 6h4m-2 0v12m-2 0h4M7 11h12m0-2v4" stroke="#fff" strokeWidth="2.500" fill="none" />
          </svg>
        </TaskApp>
        <TaskApp>
          <svg viewBox="0 0 24 24" className="size-6">
            <path d="M0 0h24v24H0z" fill="#1668c9" />
            <path d="M3 9q5-2 9 1 4-3 9-1v10q-5-1-9 1-4-2-9-1z" fill="#f5efdf" stroke="#9db8d8" />
            <circle cx="15" cy="8" r="4" fill="#cde9ff" stroke="#6fb1ea" />
            <path d="m18 11 3 4" stroke="#d79c3b" strokeWidth="2" />
          </svg>
        </TaskApp>
      </div>
      <div className="ml-0.5 flex h-10 w-[17px] flex-col items-center justify-between bg-[#f0f0f0] py-0.5 text-[#555]">
        <ChevronUp className="size-3" strokeWidth={3} />
        <ChevronDown className="size-3" strokeWidth={3} />
      </div>
      <div className="flex h-10 flex-1 items-center justify-end bg-[#07161a] text-[12px] leading-[17px]">
        <svg viewBox="0 0 16 16" className="size-4" fill="none" stroke="#fff" strokeWidth="1.200" aria-hidden>
          <circle cx="11" cy="3.500" r="2.500" />
          <path d="M7.500 9q3.500-5 7.500 0v1" />
          <circle cx="5" cy="8.500" r="2.500" />
          <path d="M1 15q4-7 8 0" />
        </svg>
        <p className="ml-8 w-[48px] text-center whitespace-nowrap">27%<br />CPU使用</p>
        <ChevronUp className="ml-[18px] size-4" strokeWidth={2} />
        <svg viewBox="0 0 16 12" className="ml-2 h-3 w-4" fill="none" stroke="#fff" aria-hidden>
          <path d="M5 3.500h9.500v7h-9V8M14.500 5.500h1v3M.5 3v2.500h5V3M1.500 0v3m3-3v3M3 6v2.500h3" />
        </svg>
        <svg viewBox="0 0 14 14" className="ml-2.5 size-[14px]" fill="none" stroke="#fff" aria-hidden>
          <path d="M1 13Q1 2 13 1M4 13q0-8 9-8M7 13q0-4 6-4" />
          <circle cx="12" cy="12" r="1" fill="#fff" />
        </svg>
        <svg viewBox="0 0 18 14" className="ml-2 h-[14px] w-[18px]" fill="none" stroke="#fff" aria-hidden>
          <path d="M1 5h3l4-3.500v11L4 9H1zM10 5q2 2 0 4m2-6q3.500 4 0 8m2.500-10q5 6 0 12" />
        </svg>
        <svg viewBox="0 0 24 14" className="ml-[7px] h-[14px] w-6" fill="none" stroke="#fff" aria-hidden>
          <path d="M.5.5h22v12H.5z" />
          <path d="M3 3.500h17M3 6.500h17" strokeDasharray="2 1" />
          <path d="M6 9.500h11" />
        </svg>
        <span className="ml-2 text-[19px] leading-none font-semibold">A</span>
        <SogouMark className="ml-3.5 size-4" />
        <p className="ml-4 w-[62px] text-center whitespace-nowrap">21:54<br />2018/11/8</p>
        <svg viewBox="0 0 16 16" className="ml-[18px] size-4" fill="none" stroke="#fff" aria-label="通知">
          <path d="M.5.5h15v12H11L8 15l-2.500-2.500h-5z" />
        </svg>
        <span className="mr-1 ml-5 h-10 w-px bg-[#777]" />
      </div>
    </footer>
  );
}

export default function App() {
  return (
    <div className={`relative flex h-screen flex-col overflow-hidden bg-[#f0f0f0] text-black ${UI}`}>
      <TitleBar />
      <MenuBar />
      <MainToolbar />
      <main className="flex min-h-0 flex-1">
        <NavPanel />
        <div className="ml-1.5 flex min-w-0 flex-1 flex-col">
          <ComponentToolbar />
          <div className="flex min-h-0 flex-1">
            <div className="flex pb-0.5"><ComponentList /></div>
            <PropertyPanel />
          </div>
        </div>
      </main>
      <StatusBar />
      <RebarDialog />
      <RedRing />
      <Taskbar />
      <ImeBar />
      <SpeedBall />
    </div>
  );
}
